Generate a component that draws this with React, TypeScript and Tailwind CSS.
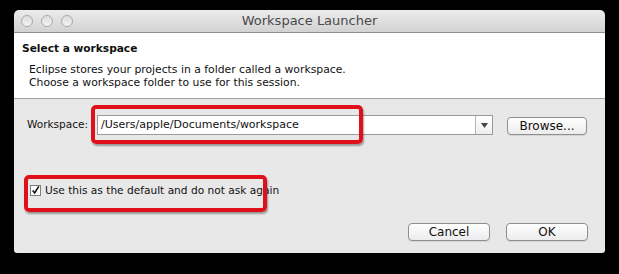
const font = { fontFamily: '"DejaVu Sans", "Liberation Sans", sans-serif' };

function Light() {
  return (
    <div className="size-[12px] rounded-full border border-[#a9a9a9] bg-gradient-to-b from-[#dcdcdc] to-[#f4f4f4]" />
  );
}

function Button({ label, w }: { label: string; w: string }) {
  return (
    <button
      className={`${w} h-[18px] rounded-[4px] border border-[#8f8f8f] bg-gradient-to-b from-white to-[#ececec] text-[12px] leading-none text-[#111] shadow-[0_1px_0_rgba(0,0,0,0.08)]`}
    >
      {label}
    </button>
  );
}

export default function App() {
  return (
    <div className="relative w-[619px] h-[274px] bg-black pt-[10px] pl-[14px]" style={font}>
      <div className="w-[591px] h-[243px] flex flex-col rounded-t-[5px] rounded-b-[3px] overflow-hidden">
        {/* Title bar */}
        <div className="relative h-[23px] flex items-center border-b border-[#8e8e8e] bg-gradient-to-b from-[#ececec] to-[#d2d2d2]">
          <div className="flex gap-[8px] pl-[7px]">
            <Light />
            <Light />
            <Light />
          </div>
          <div className="absolute inset-0 flex items-center justify-center text-[13px] text-[#4a4a4a]">
            Workspace Launcher
          </div>
        </div>

        {/* Header */}
        <div className="h-[66px] bg-white border-b border-[#a3a3a3] pl-[8px] pt-[8px] text-[#111]">
          <div className="text-[10.6px] font-bold">Select a workspace</div>
          <div className="pl-[7px] pt-[6px] text-[10.8px] leading-[13px]">
            <div>Eclipse stores your projects in a folder called a workspace.</div>
            <div>Choose a workspace folder to use for this session.</div>
          </div>
        </div>

        {/* Body */}
        <div className="flex-1 bg-[#e8e8e8] flex flex-col pt-[16px] pl-[13px] pr-[17px] text-[#111]">
          <div className="flex items-center h-[20px]">
            <span className="text-[10.5px] w-[70px]">Workspace:</span>
            <div className="w-[396px] h-[20px] flex border border-[#9a9a9a] bg-white">
              <div className="flex-1 flex items-center pl-[3px] text-[11px]">/Users/apple/Documents/workspace</div>
              <div className="w-[17px] border-l border-[#b5b5b5] bg-gradient-to-b from-white to-[#eeeeee] flex items-center justify-center">
                <svg width="7" height="5" viewBox="0 0 7 5">
                  <path d="M0 0 H7 L3.5 5 Z" fill="#444" />
                </svg>
              </div>
            </div>
            <div className="ml-[14px]">
              <Button label="Browse..." w="w-[80px]" />
            </div>
          </div>

          <label className="mt-[48px] ml-[3px] flex items-center gap-[4px] text-[10.6px]">
            <span className="size-[11px] border border-[#7d7d7d] bg-white flex items-center justify-center">
              <svg width="11" height="11" viewBox="0 0 11 11">
                <path d="M2 5.5 L4.5 8.5 L9.5 0.5" stroke="#111" strokeWidth="2" fill="none" />
              </svg>
            </span>
            Use this as the default and do not ask again
          </label>

          <div className="mt-[24px] flex justify-end gap-[16px]">
            <Button label="Cancel" w="w-[82px]" />
            <Button label="OK" w="w-[82px]" />
          </div>
        </div>
      </div>

      {/* Red annotation boxes */}
      <div className="absolute left-[91px] top-[105px] w-[272px] h-[39px] rounded-[5px] border-[4px] border-[#e0101a] shadow-[1px_2px_2px_rgba(0,0,0,0.35)]" />
      <div className="absolute left-[24px] top-[175px] w-[243px] h-[37px] rounded-[5px] border-[4px] border-[#e0101a] shadow-[1px_2px_2px_rgba(0,0,0,0.35)]" />
    </div>
  );
}
